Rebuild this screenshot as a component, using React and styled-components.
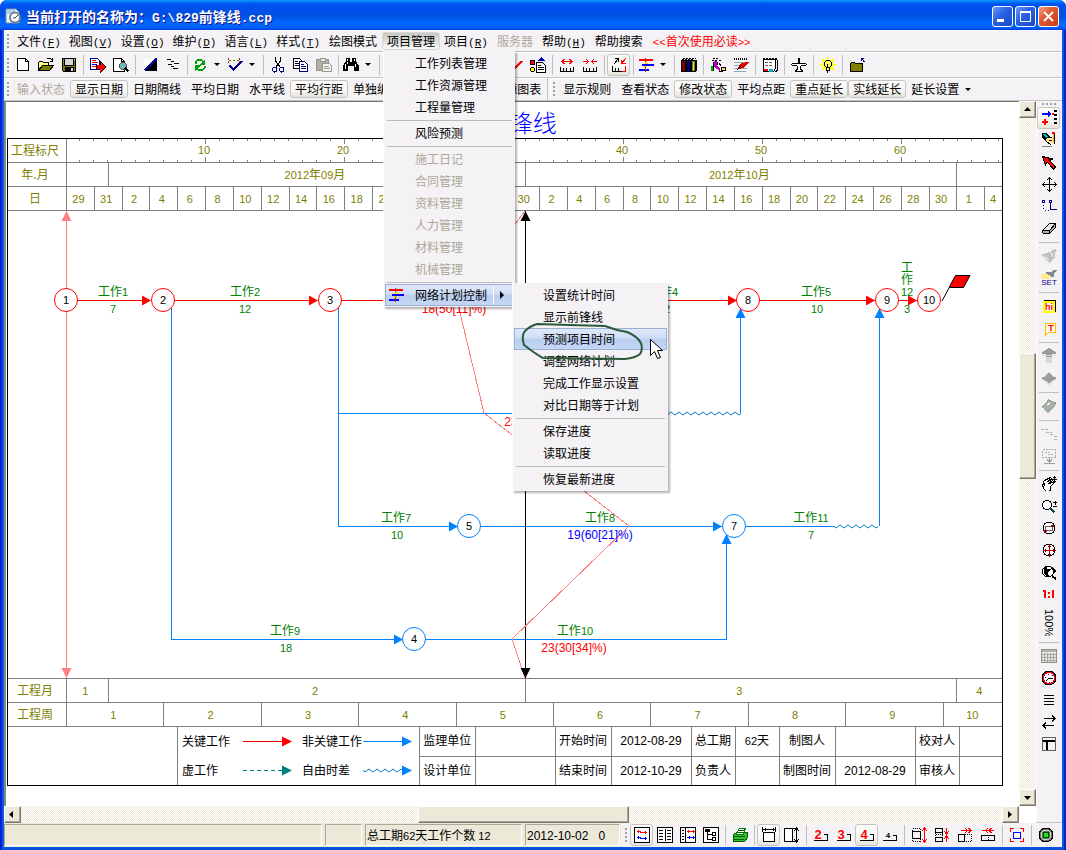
import React from 'react'
import styled, { createGlobalStyle, css } from 'styled-components'

const CJK = "'Noto Sans CJK SC', sans-serif"
const SANS = "'Liberation Sans', Arial, sans-serif"
const MONO = "'Liberation Mono', 'Courier New', monospace"

const GlobalStyle = createGlobalStyle`
    body{
        margin: 0;
        background: #fff;
        font-family: ${CJK};
        font-size: 12px;
        line-height: 16px;
        color: #000;
    }
    *{
        box-sizing: border-box;
    }
    button{
        font: inherit;
        color: inherit;
        cursor: default;
    }
`

/* ---------- text ---------- */

const Latin = styled.span`
    font-family: ${(p) => (p.$mono ? MONO : SANS)};
    font-size: ${(p) => p.$size || 11}px;
    line-height: 1;
    white-space: pre;
`
const runs = (text) => text.match(/[\x20-\x7e]+|[^\x20-\x7e]+/g) || []

const Mixed = ({ text, size, mono }) =>
    runs(text).map((r, i) => (/^[\x20-\x7e]/.test(r) ? <Latin key={i} $size={size} $mono={mono}>{r}</Latin> : r))

const SvgText = ({ x, y, fill, text, size = 11 }) => (
    <text x={x} y={y + 4} fill={fill} textAnchor="middle" fontSize="12" fontFamily={CJK}>
        {runs(text).map((r, i) => (/^[\x20-\x7e]/.test(r)
            ? <tspan key={i} fontSize={size} fontFamily={SANS}>{r}</tspan>
            : <tspan key={i}>{r}</tspan>))}
    </text>
)

/* ---------- window ---------- */

const Window = styled.div`
    display: flex;
    flex-direction: column;
    min-height: 100vh;
    background: linear-gradient(90deg, #0019cf 0, #0831d9 2px, #1666ee 3px, #0855dd 4px, #0855dd calc(100% - 4px), #1666ee calc(100% - 3px), #0831d9 calc(100% - 2px), #0019a0 100%);
    border-radius: 7px 7px 0 0;
`
const TitleBar = styled.header`
    display: flex;
    align-items: center;
    height: 30px;
    padding: 2px 7px 0 5px;
    border-radius: 7px 7px 0 0;
    background: linear-gradient(180deg, #0997ff 0, #0053ee 4px, #0050ee 8px, #0050e0 16px, #0066ff 22px, #0066ff 26px, #005bff 28px, #003dd7 100%);
`
const TitleText = styled.h1`
    flex: 1;
    margin: 0 0 0 5px;
    font-size: 14px;
    font-weight: bold;
    line-height: 20px;
    color: #fff;
    text-shadow: 1px 1px 0 #0f1089;
    white-space: nowrap;
`
const WindowButtons = styled.div`
    display: flex;
    gap: 2px;
`
const WindowButton = styled.button`
    width: 21px;
    height: 21px;
    padding: 0;
    border: 1px solid #fff;
    border-radius: 3px;
    background: ${(p) => p.$close
        ? 'linear-gradient(135deg, #f0a088 0, #e05a34 40%, #c83c14 100%)'
        : 'linear-gradient(135deg, #6c9cf8 0, #2c64e4 40%, #1848c8 100%)'};
    svg{
        display: block;
    }
`
const Frame = styled.div`
    flex: 1;
    display: flex;
    flex-direction: column;
    margin: 0 4px 4px;
    background: #f4f2f5;
`
const Main = styled.main`
    flex: 1;
    display: flex;
`

/* ---------- bars ---------- */

const Bar = styled.div`
    display: flex;
    align-items: center;
    height: ${(p) => p.$height}px;
    padding-left: 3px;
    border-bottom: 1px solid #c4c2c4;
    box-shadow: inset 0 1px 0 #fff;
`
const Grip = styled.span`
    flex: none;
    width: 2px;
    height: 14px;
    margin-right: ${(p) => p.$gap || 3}px;
    background: repeating-linear-gradient(180deg, #a0a0a4 0, #a0a0a4 2px, transparent 2px, transparent 4px);
`
const pressed = css`
    border-color: #c6c4c0;
    background: linear-gradient(180deg, #fcfcfc 0, #f8f7f5 60%, #e6e4da 100%);
`
const MenuItem = styled.div`
    position: relative;
    display: flex;
    align-items: center;
    height: 100%;
`
const MenuButton = styled.button`
    height: 18px;
    padding: 0 ${(p) => (p.$key ? 3 : 4)}px;
    border: 1px solid ${(p) => (p.$open ? '#d8d6d8' : 'transparent')};
    border-radius: 3px;
    background: ${(p) => (p.$open ? 'linear-gradient(180deg, #c8c8c4 0, #dedcda 50%, #fafafa 100%)' : 'none')};
    color: ${(p) => p.$color || '#000'};
    line-height: 16px;
    white-space: nowrap;
`
const TextButton = styled.button`
    display: flex;
    align-items: center;
    height: 18px;
    padding: 0 4px;
    border: 1px solid transparent;
    border-radius: 3px;
    background: none;
    line-height: 16px;
    white-space: nowrap;
    &:disabled{
        color: #aca899;
    }
    ${(p) => p.$on && pressed}
`
const BarEnd = styled.span`
    width: 4px;
    height: 100%;
    margin: 0 2px 0 1px;
    border-left: 1px solid #c4c2c4;
    border-right: 1px solid #fff;
`
const ToolButton = styled.button`
    flex: none;
    display: flex;
    align-items: center;
    justify-content: center;
    width: ${(p) => (p.$drop ? 35 : 23)}px;
    height: 22px;
    padding: 0;
    border: 1px solid transparent;
    border-radius: 3px;
    background: none;
    ${(p) => p.$on && pressed}
`
const DropMark = styled.span`
    flex: none;
    margin: 0 3px 0 6px;
    border: 3px solid transparent;
    border-top-color: #000;
    border-bottom: 0;
`
const Sep = styled.span`
    flex: none;
    width: 1px;
    height: 20px;
    margin: 0 2px 0 3px;
    background: #c0bec0;
`

/* ---------- menus ---------- */

const Popup = styled.div`
    position: absolute;
    z-index: 5;
    top: ${(p) => (p.$sub ? '-1px' : '100%')};
    left: ${(p) => (p.$sub ? 'calc(100% - 2px)' : '1px')};
    width: ${(p) => (p.$sub ? 156 : 132)}px;
    padding: 1px;
    background: #f4f2f5;
    border-left: 1px solid #fff;
    box-shadow: 2px 2px 2px rgba(0, 0, 0, 0.3);
`
const PopupRow = styled.div`
    position: relative;
`
const PopupItem = styled.button`
    display: flex;
    align-items: center;
    width: 100%;
    height: 22px;
    padding: 0 0 0 ${(p) => p.$indent}px;
    border: 1px solid ${(p) => (p.$on ? '#98b0d4' : 'transparent')};
    background: ${(p) => (p.$on ? 'linear-gradient(180deg, #dfe8f8 0, #cfdef6 45%, #b8cef0 50%, #c4d6f4 100%)' : 'none')};
    text-align: left;
    white-space: nowrap;
    &:disabled{
        color: #aca899;
    }
`
const PopupText = styled.span`
    flex: 1;
    margin-left: ${(p) => (p.$icon ? 11 : 0)}px;
`
const SubMark = styled.span`
    width: 20px;
    height: 18px;
    padding: 5px 0 0 6px;
    border-left: 1px solid #fff;
    &::after{
        content: '';
        display: block;
        width: 0;
        border: 4px solid transparent;
        border-left-color: #000;
        border-right: 0;
    }
`
const PopupLine = styled.hr`
    height: 1px;
    margin: 2px 2px 1px;
    border: 0;
    background: #bcbabc;
`
const Marker = styled.svg`
    position: absolute;
    z-index: 6;
    top: 36px;
    left: 7px;
    pointer-events: none;
`

/* ---------- document ---------- */

const Document = styled.section`
    flex: 1;
    min-width: 0;
    display: grid;
    grid-template-columns: minmax(0, 1fr) 17px;
    grid-template-rows: 1fr 17px;
    background: #fff;
`
const Canvas = styled.div`
    padding: 6px 16px 20px 1px;
    border-top: 1px solid #77756c;
    border-left: 2px solid #8a887e;
    background: #fff;
`
const ChartTitle = styled.h2`
    margin: 0 0 2px;
    padding-right: 2px;
    font-size: 24px;
    font-weight: 300;
    line-height: 28px;
    color: #0000ff;
    text-align: center;
`
const Chart = styled.div`
    border: 1px solid #000;
    color: #808000;
`
const ScaleRow = styled.div`
    display: flex;
    height: 24px;
    ${(p) => (p.$bottom ? 'border-top' : 'border-bottom')}: 1px solid #808080;
`
const RowLabel = styled.div`
    flex: none;
    width: 59px;
    border-right: 1px solid #808080;
    line-height: 22px;
    text-align: center;
    padding-right: 4px;
`
const Cells = styled.div`
    flex: 1;
    min-width: 0;
    display: grid;
    grid-template-columns: ${(p) => p.$cols};
`
const Cell = styled.div`
    min-width: 0;
    border-right: 1px solid #808080;
    line-height: 22px;
    text-align: center;
    padding-right: 4px;
    &:last-child{
        border-right: 0;
        padding-right: 1px;
    }
`
const Drawing = styled.svg`
    display: block;
    width: 100%;
    height: auto;
`
const RulerSvg = styled.svg`
    display: block;
    flex: 1;
    min-width: 0;
    height: 23px;
`
const Footer = styled.div`
    display: flex;
    height: 59px;
    border-top: 1px solid #808080;
    color: #000;
`
const FooterBlank = styled.div`
    width: 170px;
    border-right: 1px solid #808080;
`
const Legend = styled.div`
    display: grid;
    grid-template-columns: 61px 59px 61px 60px;
    grid-template-rows: 28px 30px;
    align-items: center;
    width: 242px;
    padding-left: 4px;
    border-right: 1px solid #808080;
    white-space: nowrap;
    svg{
        display: block;
    }
`
const Info = styled.table`
    flex: 1;
    table-layout: fixed;
    border-collapse: collapse;
    td, th{
        height: 29px;
        padding: 0 0 2px;
        border-right: 1px solid #808080;
        font-weight: normal;
        text-align: center;
        white-space: nowrap;
    }
    td:last-child{
        border-right: 0;
    }
    tr + tr > *{
        border-top: 1px solid #808080;
    }
`
const Track = styled.div`
    display: flex;
    flex-direction: ${(p) => (p.$vertical ? 'column' : 'row')};
    background: repeating-conic-gradient(#ece9d8 0 25%, #fff 0 50%) 0 0 / 2px 2px;
`
const ScrollButton = styled.button`
    flex: none;
    display: flex;
    align-items: center;
    justify-content: center;
    width: 17px;
    height: 17px;
    padding: 0;
    border: 1px solid;
    border-color: #fff #77756c #77756c #fff;
    box-shadow: inset -1px -1px 0 #aca899;
    background: #ece9d8;
`
const Gap = styled.span`
    flex: ${(p) => p.$grow} 0 0;
`
const Thumb = styled.div`
    flex: ${(p) => p.$grow} 0 0;
    border: 1px solid;
    border-color: #fff #77756c #77756c #fff;
    box-shadow: inset -1px -1px 0 #aca899;
    background: #ece9d8;
`
const SideBar = styled.aside`
    display: flex;
    flex-direction: column;
    align-items: center;
    width: 26px;
    padding: 2px 2px 0 0;
    border-left: 1px solid #fff;
    border-bottom: 1px solid #c4c2c4;
`
const SideGrip = styled.span`
    width: 14px;
    height: 2px;
    margin-bottom: 2px;
    background: repeating-linear-gradient(90deg, #a0a0a4 0, #a0a0a4 2px, transparent 2px, transparent 4px);
`
const SideButton = styled(ToolButton)`
    width: 23px;
    height: ${(p) => (p.$tall ? 34 : 22)}px;
`
const SideSep = styled.span`
    width: 20px;
    height: 1px;
    margin: 3px 0 2px;
    background: #c0bec0;
`
const StatusBar = styled.footer`
    display: flex;
    height: 24px;
`
const Panels = styled.div`
    flex: 1;
    display: flex;
    gap: 3px;
    padding: 1px 1px 1px 0;
    background: #ece9d8;
`
const Panel = styled.div`
    flex: ${(p) => (p.$width ? `0 0 ${p.$width}px` : '1')};
    padding-left: 1px;
    border: 1px solid;
    border-color: #aca899 #fff #fff #aca899;
    line-height: 20px;
    white-space: pre;
    overflow: hidden;
`
const StatusTools = styled.div`
    display: flex;
    align-items: center;
    padding: 0 5px 0 4px;
`

/* ---------- icons ---------- */

const P = ({ d, c = '#000', f = 'none', w = 1 }) => <path d={d} stroke={c} fill={f} strokeWidth={w} />
const F = ({ d, c = '#000' }) => <path d={d} fill={c} />

const Glyph = ({ x, y, size, fill = '#f00', children }) => (
    <text x={x} y={y} fontSize={size} fill={fill} fontWeight="bold" textAnchor="middle" fontFamily={SANS}>{children}</text>
)

const icons = {
    blank: null,
    fresh: <P d="M2.5 1.5h8l3 3v9h-11zM10.5 1.5v3h3" f="#fff" />,
    open: <>
        <P d="M.5 13.5v-8l1-1h3l1 1h5v3" f="#ffff80" />
        <P d="M.5 13.5l4-5h11l-4 5z" f="#808000" />
        <P d="M8.5 2.5l1-1h3l2 2M14.500 1v3H12" />
    </>,
    save: <>
        <P d="M1.5 1.5h13v13h-12l-1-1z" f="#808000" />
        <F d="M4 2h8v6H4z" c="#d8d8d8" /><F d="M13 2h1v1h-1z" c="#fff" />
        <F d="M4 10h9v5H4z" /><F d="M10 11h2v3h-2z" c="#e0e0e0" /><P d="M3.5 2v6.5h9V2" />
    </>,
    exportTo: <>
        <P d="M.5 1.5h7l2 2v9h-9z" c="#000080" f="#fff" />
        <P d="M2 3.5h4M2 5.5h6M2 9.5h4" c="#f00" /><P d="M2 7.5h5" c="#00f" />
        <F d="M6 8h4V4l6 6-6 6v-4H6z" /><F d="M7 8h4V5l4 5-5 5v-3H7z" c="#f00" />
    </>,
    preview: <>
        <P d="M.5 1.5h8l3 3v10H.5zM8.5 1.5v3h3" f="#fff" />
        <circle cx="10" cy="9" r="3.5" fill="#70b8c0" stroke="#505050" />
        <P d="M12 11l3.5 3.5" w="2" />
    </>,
    slope: <><F d="M2 2h12L2 14z" c="#fff" /><F d="M15 2v12H3z" /><P d="M2.5 13.5l12-12" c="#0000a0" w="2" /></>,
    steps: <P d="M2 2.500h4M6 4.500h3M9 6.500h5M3 7.500h4M6 9.500h3M8 11.500h5" />,
    refresh: <>
        <path d="M3.5 7V5l2-2h4l2 2" stroke="#00a000" strokeWidth="2" fill="none" />
        <path d="M12.5 9v2l-2 2h-4l-2-2" stroke="#00a000" strokeWidth="2" fill="none" />
        <F d="M13 2v6H7zM3 14V8h6z" c="#00a000" />
    </>,
    check: <>
        <path d="M2 3.5h11" stroke="#00a000" strokeDasharray="2 2" /><path d="M1.5 1v5M12.5 1v5" stroke="#c03000" strokeDasharray="2 1" />
        <P d="M2.5 8l4 5L15 4" c="#000080" w="2" />
    </>,
    cut: <>
        <P d="M5.5 0v4l4.500 6M10.500 0v4L6 10" />
        <ellipse cx="4.500" cy="12.500" rx="2" ry="2.500" stroke="#000080" fill="none" /><ellipse cx="11.500" cy="12.500" rx="2" ry="2.500" stroke="#000080" fill="none" />
    </>,
    copy: <>
        <P d="M.5 1.500h6l3 3v7h-9z" f="#fff" /><P d="M2 4.500h3M2 6.500h5M2 8.500h4" />
        <P d="M6.500 4.500h5l3 3v7h-8z" c="#000080" f="#fff" /><P d="M8 7.500h3M8 9.500h5M8 11.500h5" c="#000080" />
    </>,
    paste: <>
        <P d="M.5 2.500h12v11H.5z" c="#989890" f="#b0b0a8" /><P d="M4.500 1.500h5v3h-5z" c="#989890" f="#e4e4dc" />
        <P d="M6.500 6.500h7l2 2v6h-9z" c="#989890" f="#f4f4ee" /><P d="M8 9.500h5M8 11.500h6" c="#989890" />
    </>,
    find: <>
        <F d="M3 1h4v4h2V1h4v3l3 5v5h-5V9H5v5H0V9l3-5z" />
        <P d="M4.500 2v2M11.500 2v2M2.500 7v5M4.500 5v2M12.500 7v3" c="#fff" />
    </>,
    redCheck: <P d="M2.500 9l4 4L15 4" c="#f00" w="2" />,
    shapes: <>
        <P d="M.5 3.500h4v4h-4z" f="#f00" /><circle cx="2.500" cy="12.500" r="2" fill="#ff0" stroke="#000" /><F d="M8 4l3.500-4L15 4z" c="#0000c0" />
        <P d="M6.500 5.500h6l3 3v7h-9z" f="#fff" /><P d="M8 8.500h3M8 10.500h6M8 12.500h6" />
    </>,
    widen: <><P d="M1.500 10v4.500h13V10M4.500 11v3M7.500 11v3M11.500 11v3" /><P d="M3 4.500h10M5.500 2l-2.500 2.500L5.500 7M10.500 2l2.500 2.500L10.500 7" c="#f00" /></>,
    narrow: <><P d="M1.500 10v4.500h13V10M4.500 11v3M7.500 11v3M11.500 11v3" /><P d="M1 4.500h5M4 2l2.500 2.500L4 7M15 4.500h-5M12 2L9.500 4.500 12 7" c="#f00" /></>,
    adjust: <>
        <P d="M1.500 9v5.500h9M4.500 11v3M7.500 11v3M3 7l4-5M4 1.500h3.500V5" /><P d="M10.500 14.500h4V9M10.500 6.500l4-5M10.500 3v3.500h4" c="#f00" />
    </>,
    progress: <>
        <F d="M7 4h2l1 3-2 4H6l1-4z" c="#ffd000" /><P d="M1 2.500h14" c="#f00" w="2" /><P d="M4 7.500h12M1 12.500h10" c="#00f" w="2" />
        <P d="M7.500 1v4M7.500 10v5" c="#c03000" />
    </>,
    books: <>
        <P d="M.5 3.500h4v11h-4z" f="#800000" /><P d="M5.500 3.500h4v11h-4z" f="#000080" /><P d="M10.500 3.500h4v11h-4z" f="#808000" />
        <path d="M2 1.500h13M1 2.500h12" stroke="#000" strokeDasharray="2 1" /><P d="M15.500 3v11" /><P d="M12.500 5v8" c="#e0e080" />
    </>,
    people: <>
        <path d="M3 1.500h6M2 3.500h5M9 3.500h2" stroke="#000" strokeDasharray="2 1" /><F d="M4 4h3v5l3 3v2L4 10z" c="#c000c0" /><F d="M1 9h2v5H1z" c="#00a000" />
        <P d="M3.500 5v9M9 6l2 3M7.500 5v3" /><circle cx="13.500" cy="12" r="2" fill="#ffe040" stroke="#000" /><P d="M9 14.500h4" />
    </>,
    note: <>
        <F d="M1 2h12v13H1z" c="#f4f8f8" /><path d="M1 1.500h14" stroke="#000" strokeWidth="2" strokeDasharray="1 1" />
        <P d="M1 5.500h13M1 8.500h10M1 11.500h13M1 14.500h12" c="#90a8a8" /><F d="M5 11l3-5 8-1-4 5-5 2z" c="#e00000" /><P d="M4 13l5-5" />
    </>,
    notepad: <>
        <P d="M1.500 2.500h12v9l-2 3h-10z" f="#fff" /><path d="M1 1.500h14" stroke="#000" strokeWidth="2" strokeDasharray="2 1" />
        <P d="M3 5.500h3M7 5.500h3M3 8.500h3M7 8.500h3" c="#606060" /><P d="M15.500 3v10l-2 2" w="1" /><F d="M2 12h4v2H2z" c="#f00" /><F d="M7 12h4v3H7z" c="#00b0c0" />
    </>,
    plane: <P d="M7.500 1.500h1v5h6l1 1-1 1h-4l-1 1v3l2 1v1h-7v-1l2-1v-3l-1-1h-4l-1-1 1-1h6z" f="#fff" />,
    bulb: <>
        <F d="M7 0h2v2H7zM0 7h2v2H0zM14 7h2v2h-2zM2 2h2v2H2zM12 2h2v2h-2zM3 3h10v9H3zM2 11h2v2H2zM12 11h2v2h-2z" c="#ff0" />
        <circle cx="8" cy="7" r="3.500" fill="#ffff60" stroke="#000" /><P d="M6.500 10.500h3v3h-3zM7.500 14v2M7.500 7v3" />
    </>,
    folder: <><P d="M1.500 14.500v-8l1-1h3l1 1h7v8z" f="#808000" /><P d="M15.500 5l-3-3.500M12 3.500v-2h3" c="#000080" /></>,

    addWork: <>
        <P d="M1 4h8" c="#00f" w="2" /><F d="M7 1l4 3-4 3z" c="#00f" /><F d="M11 3h2v2h-2z" c="#f00" /><F d="M3 9h2v2h2v2H5v2H3v-2H1v-2h2z" c="#f00" />
        <path d="M14.500 0v15" stroke="#000" strokeWidth="3" strokeDasharray="2 2" />
    </>,
    pen: <>
        <F d="M1 1h5l2 3 3 2v6H7L1 5z" /><F d="M2 2h3l2 3-2 1z" c="#00c0c0" /><F d="M6 6l5-1 2 3-3 5-5-4z" c="#ffe8a0" />
        <P d="M6 6l5-1M10 13l-5-4M8 8l3 1" /><P d="M12.500 1v10" c="#ffb000" w="2" /><F d="M11 0h3v2h-3z" c="#f00" /><P d="M1 14.500h10" c="#808080" /><P d="M14 2l-.5 10" />
    </>,
    pointer: <P d="M1.500 2.500l10 2.500-3 1 6 7-2 2-6.500-7-1.500 3z" f="#f00" />,
    move: <P d="M8.500 1v15M1 8.500h15M6 4l2.500-2.500L11 4M6 13l2.500 2.500L11 13M4 6L1.500 8.500 4 11M13 6l2.500 2.500L13 11" />,
    link: <>
        <path d="M2.500 4v8h7" stroke="#000080" fill="none" strokeDasharray="1 2" /><P d="M1.500 2.500h2v2h-2zM8.500 2.500h2v2h-2zM9.500 5v6.500H16" c="#000080" />
    </>,
    eraser: <><P d="M1.500 10.500l7-7h6l-6 7z" f="#e8e8e8" /><P d="M1.500 10.500h7v3h-6l-1-1zM8.500 13.500l6-6v-4l-6 7z" f="#a8b0a8" /></>,
    brush: <><F d="M0 7l5-2 4-1 5-3 2 1-2 3v4l-6 6-5-5z" c="#c0c4c0" /><P d="M9 4l4 5M3 8l5 4" c="#f0f0f0" /></>,
    brushSet: <>
        <F d="M2 4l4-2h4l4-3 2 1-3 4v3H3z" c="#808890" /><F d="M0 5l4-2 6 3-1 3H1z" c="#ffe890" />
        <text x="8" y="15" fontSize="8" textAnchor="middle" fill="#000080" fontFamily={SANS}>SET</text>
    </>,
    hi: <><P d="M3.500 2.500h11v11h-11z" f="#fff" /><P d="M3 3v11h10V4H3" c="#ff0" w="2" /><Glyph x="8" y="12" size="9">hi</Glyph></>,
    tip: <><P d="M4.500 3.500h10v9h-7l-3 3z" c="#ffc000" f="#fff8e8" w="1" /><Glyph x="10" y="11" size="9">T</Glyph></>,
    up: <><F d="M8 0l7 4v2h-4v3H5V6H1V4z" c="#9a9a9a" /><F d="M5 9h6v6H5zM2 7h12v1H2z" c="#d8d8d4" /></>,
    down: <><F d="M8 1l7 8-7 6-7-6z" c="#dcdcd8" /><F d="M8 2l3 4 5 2-8 5-8-5 5-2z" c="#9c9c9c" /></>,
    book: <><P d="M1.500 9l6-7 7 3-7 8z" c="#90a090" f="#a8b4a8" /><P d="M1.500 9l6 5 7-8M3 11l4 4 7-7" c="#a8b4a8" /><P d="M6 7l3-2" c="#fff" /></>,
    cascade: <path d="M0 3.500h8M5 6.500h6M9 8.500h4M13 10.500h3M13 13.500h3" stroke="#a8b4a8" strokeDasharray="3 1" />,
    dropRow: <>
        <path d="M1.500 1.500h13v8h-13zM4 4.500h5M7 6.500h5" stroke="#a8b4a8" fill="none" strokeDasharray="2 1" /><P d="M8.500 9v5M6 11.500l2.500 2.500 2.500-2.500M3 15.500h11" c="#98a498" />
    </>,
    hand: <>
        <P d="M5.500 15.500l-3-3-1-4 1-1 1 2-1-4 1-1 6-3 1 1-4 3 5-2v1l-4 3 5-1v1l-3 3v3l-1 2" f="#fff" /><P d="M13.500 0v7M10 3.500h6M12 1.500h3M12 5.500h3" />
    </>,
    zoom: <><circle cx="6" cy="7" r="4.500" stroke="#000" fill="#fff" /><P d="M9.500 10.500l4 4" c="#004040" w="2" /><P d="M12 4.500h4M14 2.500v4M12 8.500h4" /></>,
    fitBox: <><circle cx="8" cy="8" r="6" stroke="#000" fill="#fff" /><P d="M4.500 6.500h7v4h-7z" c="#606060" /><F d="M10 5h3v2h-3zM3 10h3v2H3z" c="#a00000" /></>,
    target: <><circle cx="8" cy="8" r="6" stroke="#000" fill="#fff" /><P d="M8.500 2v13M2 8.500h13" c="#c00000" /><P d="M7 4.500h3M7 12.500h3M4.500 7v3M12.500 7v3" c="#600" /></>,
    zoomBack: <><circle cx="7" cy="7.500" r="5.500" stroke="#000" fill="#fff" /><F d="M3 8V4l3-2v3h4L7 8v3l3 2H6L4 11z" /><P d="M11 4l3 3-2 2M11 12l4 3" w="2" /></>,
    oneToOne: <F d="M3 4h2v8H3zM2 4h3v2H2zM11 4h2v8h-2zM7 6h2v2H7zM7 10h2v2H7z" c="#f00" />,
    calendar: <>
        <P d="M.5 1.500h15v13H.5z" c="#909088" f="#e8e8e0" /><F d="M1 2h14v2H1z" c="#a8b8a8" />
        <P d="M1 6.500h14M1 9.500h14M1 12.500h14M3.500 5v9M6.500 5v9M9.500 5v9M12.500 5v9" c="#a8a8a0" />
    </>,
    clock: <><circle cx="8" cy="8" r="7" stroke="#000" fill="#f00" /><circle cx="8" cy="8" r="5" fill="#fff" /><P d="M8 8.500h4M8 8.500l-3 2" /><F d="M7 4h1v1H7zM4 7h1v1H4zM8 12h1v1H8zM11 5h1v1h-1z" c="#00f" /></>,
    lines: <P d="M3 3.500h10M3 6.500h10M3 9.500h10M3 12.500h10" />,
    swap: <P d="M3 4.500h11M11 1.500l3 3-3 3M13 11.500H2M5 8.500l-3 3 3 3" />,
    layout: <><P d="M1.500 1.500h13v13h-13z" c="#606060" /><P d="M2 5h12M6 5v9" w="2" /></>,

    viewNet: <><P d="M.5 .5h15v15H.5z" f="#fff" /><P d="M3 4.500h3l1 1h6M4 3v3M11 4v3" c="#f00" /><P d="M3 10.500h3l1 1h6M4 9v3M11 10v3" c="#00f" /></>,
    viewBars: <><P d="M.5 .5h15v15H.5z" f="#fff" /><P d="M8.500 2v12M2 3.500h4M2 6.500h4M2 9.500h4M2 12.500h4M10 3.500h4M10 6.500h4M10 9.500h4M10 12.500h4" /></>,
    viewMix: <><P d="M.5 .5h15v15H.5zM5.500 1v14M2 3.500h2M2 6.500h2M2 9.500h2M2 12.500h2" f="#fff" /><P d="M7 4.500h8M8.500 3v3M13.500 3v3" c="#f00" /><P d="M7 10.500h8M9.500 9v3M13.500 9v3" c="#00f" /></>,
    viewTree: <><P d="M.5 .5h15v15H.5z" f="#fff" /><P d="M3 3.500h4M4.500 4v8h5M5 7.500h4" /><P d="M9.500 5.500h3v3h-3zM9.500 10.500h3v3h-3zM2.500 2.500h4v2h-4z" /></>,
    print: <>
        <P d="M1.500 7.500l3-2h11v5l-3 4h-11z" c="#006000" f="#30c030" /><P d="M4.500 7l3-6h6l-2 6z" c="#008000" f="#fff" /><P d="M1 9.500h12M2 12.500h10M7 3.500h5M6 5.500h5" c="#006000" />
    </>,
    boxWide: <><P d="M2.500 5.500h11v9h-11z" f="#fff" /><P d="M1 2.500h14M4 1v3M12 1v3M1.500 0v5M14.500 0v5" /></>,
    boxTall: <><P d="M.5 1.500h8v13h-8z" f="#fff" /><P d="M12.500 1v14M10 4l2.500-3L15 4M10 12l2.500 3 2.500-3M9 1.500h2M9 14.500h2" /></>,
    two: <><Glyph x="5" y="12" size="13">2</Glyph><P d="M1 13.500h13v-6h-3" /></>,
    three: <><Glyph x="5" y="12" size="13">3</Glyph><P d="M1 13.500h13v-6h-3" /></>,
    four: <><Glyph x="5" y="12" size="13">4</Glyph><P d="M1 13.500h13v-6h-3" /></>,
    fourSmall: <><Glyph x="6" y="11" size="8" fill="#000">4</Glyph><P d="M1 13.500h13v-5h-3" /></>,
    growV: <><path d="M1.500 1.500h8v3h-8zM1.500 11.500h8v3h-8z" stroke="#000" fill="none" strokeDasharray="1 1" /><P d="M1.500 4.500h8v7h-8z" /><P d="M13.500 1v14M11 4l2.500-3L16 4M11 12l2.500 3 2.500-3" c="#f00" /></>,
    shrinkV: <><path d="M1.500 5.500v5M8.500 5.500v5M2 7.500h7" stroke="#000" strokeDasharray="1 1" /><P d="M1.500 1.500h7v4h-7zM1.500 10.500h7v4h-7z" /><P d="M12.500 1v5M10 4l2.500 3L15 4M12.500 15v-5M10 12l2.500-3 2.500 3" c="#f00" /></>,
    growH: <><path d="M8 7.500h6.500v7H8" stroke="#000" fill="none" strokeDasharray="1 1" /><P d="M1.500 7.500h6v7h-6z" /><P d="M4 3.500h10M8 1l2.500 2.500L8 6M11.500 1L14 3.500 11.500 6" c="#f00" /></>,
    shrinkH: <><path d="M8.500 8v6" stroke="#000" strokeDasharray="1 1" /><P d="M1.500 8.500h13v5h-13z" /><P d="M2 3.500h12M8 1L5.500 3.500 8 6M11.500 1L9 3.500 11.500 6" c="#f00" /></>,
    fit: <><P d="M1.500 5V1.500H5M11 1.500h3.500V5M14.500 11v3.500H11M5 14.500H1.500V11" c="#f00" /><P d="M4.500 5h7v6h-7z" c="#00f" /></>,
    ball: <><circle cx="8" cy="8" r="7" fill="#707070" stroke="#000" /><circle cx="8" cy="8" r="5" fill="#484" stroke="#ccc" /><circle cx="8" cy="8" r="3" fill="#20e020" stroke="#040" /></>,
}

const Icon = ({ name }) => (
    <svg width="16" height="16" viewBox="0 0 16 16" fill="none" shapeRendering="crispEdges" aria-hidden="true">{icons[name]}</svg>
)

const Tools = ({ list, Button = ToolButton, Line = Sep }) =>
    list.map((t, i) => {
        if (t === '|') return <Line key={i} />
        const on = t.endsWith('!')
        const drop = t.endsWith('+')
        const name = t.replace(/[!+]/, '')
        return (
            <Button key={i} type="button" aria-label={name} $on={on} $drop={drop}>
                <Icon name={name} />
                {drop && <DropMark />}
            </Button>
        )
    })

/* ---------- data ---------- */

const menus = [
    ['文件', 'F'], ['视图', 'V'], ['设置', 'O'], ['维护', 'D'], ['语言', 'L'], ['样式', 'T'], ['绘图模式'], ['项目管理'],
    ['项目', 'R'], ['服务器', '', '#aca899'], ['帮助', 'H'], ['帮助搜索'], ['<<首次使用必读>>', '', '#ff0000'],
]
const projectMenu = ['工作列表管理', '工作资源管理', '工程量管理', '-', '风险预测', '-',
    '*施工日记', '*合同管理', '*资料管理', '*人力管理', '*材料管理', '*机械管理', '-']
const controlMenu = ['设置统计时间', '显示前锋线', '预测项目时间', '调整网络计划', '完成工作显示设置', '对比日期等于计划', '-',
    '保存进度', '读取进度', '-', '恢复最新进度']

const toolbar = ['fresh', 'open', 'save', '|', 'exportTo', 'preview', '|', 'slope', 'steps', '|', 'refresh+', 'check+', '|',
    'cut', 'copy', 'paste', '|', 'find+', '|', 'blank', 'blank', 'blank', 'blank', 'blank', '|', 'redCheck', 'shapes', '|',
    'widen', 'narrow', '|', 'adjust!', '|', 'progress+', '|', 'books', '|', 'people', 'note', '|', 'notepad', '|', 'plane', '|', 'bulb', '|', 'folder']
const sideTop = ['addWork!', 'pen', 'pointer', 'move', 'link', 'eraser', '|', 'brush', 'brushSet', '|', 'hi', 'tip', '|', 'up', 'down', '|',
    'book', '|', 'cascade', 'dropRow', '|', 'hand', 'zoom', 'fitBox', 'target', 'zoomBack', 'oneToOne']
const sideBottom = ['|', 'calendar', 'clock', 'lines', 'swap', 'layout']
const statusTools = ['viewNet!', 'viewBars', 'viewMix', 'viewTree', '|', 'print', '|', 'boxWide!', 'boxTall', '|',
    'two', 'three', 'four!', 'fourSmall', '|', 'growV', 'shrinkV', 'growH', 'shrinkH', '|', 'fit', '|', 'ball']

const leftOptions = ['*输入状态', '!显示日期', '日期隔线', '平均日期', '水平线', '!平均行距', '单独编辑', '自动调整行距', '资源图表']
const rightOptions = ['显示规则', '查看状态', '!修改状态', '平均点距', '!重点延长', '!实线延长']

const days = ['29', '31',
    ...Array.from({ length: 15 }, (_, i) => `${i * 2 + 2}`),
    ...Array.from({ length: 15 }, (_, i) => `${i * 2 + 2}`), '1', '4']

const RED = '#ff0000'
const BLUE = '#0080ff'
const GREEN = '#008000'
const PINK = '#ff8080'
const DAY = 13.925

const nodes = [
    ['1', 66, 300, RED], ['2', 163, 300, RED], ['3', 330, 300, RED], ['8', 748, 300, RED], ['9', 887, 300, RED], ['10', 929, 300, RED],
    ['5', 469, 526, BLUE], ['7', 734, 526, BLUE], ['4', 414, 639, BLUE],
]
const labels = [
    ['工作1', 113, 292], ['7', 113, 309], ['工作2', 245, 292], ['12', 245, 309], ['18(50[11]%)', 454, 309, RED],
    ['工作4', 663, 292], ['12', 664, 309], ['工作5', 816, 292], ['10', 817, 309], ['工', 907, 268], ['作', 907, 280], ['12', 907, 292], ['3', 907, 309],
    ['工作7', 396, 518], ['10', 397, 535], ['工作8', 600, 518], ['19(60[21]%)', 600, 535, '#0000ff'], ['工作11', 811, 518], ['7', 811, 535],
    ['工作9', 285, 631], ['18', 286, 648], ['工作10', 575, 631], ['23(30[34]%)', 574, 648, RED], ['23(30[37]%)', 537, 422, RED],
]

/* ---------- drawings ---------- */

const wave = (x1, x2, y) => {
    let d = `M${x1} ${y}`
    let k = 1
    for (let x = x1; x + 4 <= x2; x += 4) {
        d += `q2 ${k * 3} 4 0`
        k = -k
    }
    return d
}
const right = (x, y) => `M${x} ${y + 0.5}l-9 -5v10z`
const up = (x, y) => `M${x + 0.5} ${y}l-5 10h10z`
const down = (x, y) => `M${x + 0.5} ${y}l-5 -10h10z`

const Network = () => (
    <Drawing viewBox="8 211 994 467" role="img" aria-label="829前锋线">
        <g fill="none" shapeRendering="crispEdges">
            <path d="M66.500 211V678" stroke={PINK} />
            <path d="M78 300.500H150M174 300.500H317M341 300.500H737M760 300.500H875M899 300.500H917" stroke={RED} />
            <path d="M171.500 300V639.500H403M338.500 300V526.500H457M338.500 413.500H665M740.500 413V310M481 526.500H722M746 526.500H834M879.500 526V310M426 639.500H726.500V538" stroke={BLUE} />
            <path d="M525.500 211V678" stroke="#000" />
            <path d="M525 211L457 300L484 413L629 526L512 639L525 678" stroke={PINK} />
        </g>
        <path d={wave(665, 741, 413.5) + wave(834, 880, 526.5)} stroke="#0080c0" fill="none" />
        <path d={up(66, 211) + down(66, 678)} fill={PINK} />
        <path d={up(525, 211) + down(525, 678)} fill="#000" />
        <path d={right(151, 300) + right(318, 300) + right(737, 300) + right(875, 300) + right(917, 300)} fill={RED} />
        <path d={right(458, 526) + right(722, 526) + right(403, 639) + up(740, 308) + up(879, 308) + up(726, 534)} fill={BLUE} />
        <path d="M942 301L949 288" stroke="#000" />
        <path d="M955.500 275.500H970L963.500 287.500H949z" fill={RED} stroke="#000" />
        {nodes.map(([n, x, y, c]) => (
            <g key={n}>
                <circle cx={x} cy={y} r="11.500" fill="#fff" stroke={c} />
                <SvgText x={x} y={y} text={n} fill="#000" />
            </g>
        ))}
        {labels.map(([t, x, y, c], i) => (
            <SvgText key={i} x={x} y={y} text={t} fill={c || GREEN} size={t.includes('%') ? 12 : 11} />
        ))}
    </Drawing>
)

const Ruler = () => (
    <RulerSvg viewBox="67 139 935 23" preserveAspectRatio="xMinYMin meet">
        {Array.from({ length: 67 }, (_, i) => {
            const n = i + 1
            const x = Math.floor(66 + n * DAY) + 0.5
            const len = n % 10 ? 2 : 5
            return <path key={n} d={`M${x} 139v${len}M${x} 162v-${len}`} stroke="#808080" shapeRendering="crispEdges" />
        })}
        {[10, 20, 30, 40, 50, 60].map((n) => <SvgText key={n} x={Math.floor(65 + n * DAY)} y={150} text={`${n}`} fill="#808000" />)}
    </RulerSvg>
)

const LegendArrow = ({ color, dash, wavy }) => (
    <svg width="50" height="12" viewBox="0 0 50 12" fill="none">
        {wavy ? <path d={wave(0, 42, 6.5)} stroke="#0080c0" /> : <path d="M0 6.500H42" stroke={color} strokeDasharray={dash} shapeRendering="crispEdges" />}
        <path d="M49 6.500l-10 -5v10z" fill={color} />
    </svg>
)

const arrows = { up: 'M1 5h7L4.500 1z', down: 'M1 2h7L4.500 6z', left: 'M5 0v7L1 3.500z', right: 'M2 0v7l4-3.500z' }
const Arrow = ({ to }) => <svg width="9" height="7" viewBox="0 0 9 7"><path d={arrows[to]} /></svg>

/* ---------- parts ---------- */

const Items = ({ list, indent, active }) => list.map((t, i) => {
    if (t === '-') return <PopupLine key={i} />
    return (
        <PopupItem key={i} type="button" $indent={indent} $on={t === active} disabled={t[0] === '*'}>
            {t.replace('*', '')}
        </PopupItem>
    )
})

const ProjectMenu = () => (
    <Popup>
        <Items list={projectMenu} indent={29} />
        <PopupRow>
            <PopupItem type="button" $on $indent={2}>
                <Icon name="progress" />
                <PopupText $icon>网络计划控制</PopupText>
                <SubMark />
            </PopupItem>
            <Popup $sub>
                <Items list={controlMenu} indent={28} active="预测项目时间" />
                <Marker width="150" height="46" viewBox="520 319 150 46" fill="none">
                    <path d="M537 324L570 325L605 326L617 330L627 332Q637 336 641 343Q643 350 640 354Q635 358 625 359L543 358Q537 355 524 345Q521 335 525 331Q530 326 537 324z" stroke="#2a5a3a" strokeWidth="2" />
                    <path d="M650.500 339.500v16l4-4 3 7 3-1-3-7h5z" fill="#fff" stroke="#000" />
                </Marker>
            </Popup>
        </PopupRow>
    </Popup>
)

const Option = ({ text }) => (
    <TextButton type="button" $on={text[0] === '!'} disabled={text[0] === '*'}>{text.replace(/[!*]/, '')}</TextButton>
)

const InfoTable = () => (
    <Info>
        <colgroup>
            {[55, 80, 56, 80, 44, 44, 56, 80, 44].map((w, i) => <col key={i} width={w} />)}
            <col />
        </colgroup>
        <tbody>
            <tr>
                <th>监理单位</th><td /><th>开始时间</th><td><Mixed text="2012-08-29" size={12} /></td><th>总工期</th>
                <td><Mixed text="62天" /></td><th>制图人</th><td /><th>校对人</th><td />
            </tr>
            <tr>
                <th>设计单位</th><td /><th>结束时间</th><td><Mixed text="2012-10-29" size={12} /></td><th>负责人</th>
                <td /><th>制图时间</th><td><Mixed text="2012-08-29" size={12} /></td><th>审核人</th><td />
            </tr>
        </tbody>
    </Info>
)

const MONTHS = '30fr 300fr 310fr 32fr'

const App = () => {
    return (
        <>
        <GlobalStyle />
        <Window>
            <TitleBar>
                <svg width="16" height="16" viewBox="0 0 16 16">
                    <path d="M1 1h10l3 3v11H1z" fill="#e8f4f8" stroke="#6890a8" />
                    <path d="M2 2h8v4H2z" fill="#a8d0e0" />
                    <circle cx="10" cy="9.500" r="5" fill="#fff" stroke="#708090" strokeWidth="2" />
                    <path d="M10 10l3-3M10 10H8" stroke="#204060" />
                </svg>
                <TitleText><Mixed text="当前打开的名称为：G:\829前锋线.ccp" size={13} mono /></TitleText>
                <WindowButtons>
                    <WindowButton type="button" aria-label="最小化"><svg width="19" height="19"><path d="M4 12h7v3H4z" fill="#fff" /></svg></WindowButton>
                    <WindowButton type="button" aria-label="最大化"><svg width="19" height="19"><path d="M4.500 5v9.500h10V5M4 5.500h11" stroke="#fff" strokeWidth="1" fill="none" /><path d="M4 4h11v2H4z" fill="#fff" /></svg></WindowButton>
                    <WindowButton type="button" aria-label="关闭" $close><svg width="19" height="19"><path d="M5 5l9 9M14 5l-9 9" stroke="#fff" strokeWidth="2" /></svg></WindowButton>
                </WindowButtons>
            </TitleBar>
            <Frame>
                <Bar as="nav" $height={22}>
                    <Grip $gap={4} />
                    {menus.map(([name, key, color]) => (
                        <MenuItem key={name}>
                            <MenuButton type="button" $key={key} $color={color} $open={name === '项目管理'} disabled={name === '服务器'}>
                                <Mixed text={name} />
                                {key && <Latin $mono>(<u>{key}</u>)</Latin>}
                            </MenuButton>
                            {name === '项目管理' && <ProjectMenu />}
                        </MenuItem>
                    ))}
                </Bar>
                <Bar $height={26}>
                    <Grip $gap={2} />
                    <Tools list={toolbar} />
                </Bar>
                <Bar $height={23}>
                    <Grip />
                    {leftOptions.map((t) => <Option key={t} text={t} />)}
                    <BarEnd />
                    <Grip />
                    {rightOptions.map((t) => <Option key={t} text={t} />)}
                    <TextButton type="button">延长设置<DropMark /></TextButton>
                </Bar>
                <Main>
                    <Document>
                        <Canvas>
                            <ChartTitle><Mixed text="829前锋线" size={20} /></ChartTitle>
                            <Chart>
                                <ScaleRow><RowLabel>工程标尺</RowLabel><Ruler /></ScaleRow>
                                <ScaleRow>
                                    <RowLabel>年.月</RowLabel>
                                    <Cells $cols={MONTHS}>
                                        <Cell /><Cell><Mixed text="2012年09月" /></Cell><Cell><Mixed text="2012年10月" /></Cell><Cell />
                                    </Cells>
                                </ScaleRow>
                                <ScaleRow>
                                    <RowLabel>日</RowLabel>
                                    <Cells $cols="repeat(33, 20fr) 12fr">
                                        {days.map((d, i) => <Cell key={i}><Mixed text={d} /></Cell>)}
                                    </Cells>
                                </ScaleRow>
                                <Network />
                                <ScaleRow $bottom>
                                    <RowLabel>工程月</RowLabel>
                                    <Cells $cols={MONTHS}>
                                        {['1', '2', '3', '4'].map((n) => <Cell key={n}><Mixed text={n} /></Cell>)}
                                    </Cells>
                                </ScaleRow>
                                <ScaleRow $bottom>
                                    <RowLabel>工程周</RowLabel>
                                    <Cells $cols="repeat(9, 70fr) 42fr">
                                        {Array.from({ length: 10 }, (_, i) => <Cell key={i}><Mixed text={`${i + 1}`} /></Cell>)}
                                    </Cells>
                                </ScaleRow>
                                <Footer>
                                    <FooterBlank />
                                    <Legend>
                                        <span>关键工作</span><LegendArrow color={RED} />
                                        <span>非关键工作</span><LegendArrow color={BLUE} />
                                        <span>虚工作</span><LegendArrow color="#008080" dash="4 3" />
                                        <span>自由时差</span><LegendArrow color={BLUE} wavy />
                                    </Legend>
                                    <InfoTable />
                                </Footer>
                            </Chart>
                        </Canvas>
                        <Track $vertical>
                            <ScrollButton type="button" aria-label="向上"><Arrow to="up" /></ScrollButton>
                            <Gap $grow={236} /><Thumb $grow={125} /><Gap $grow={311} />
                            <ScrollButton type="button" aria-label="向下"><Arrow to="down" /></ScrollButton>
                        </Track>
                        <Track>
                            <ScrollButton type="button" aria-label="向左"><Arrow to="left" /></ScrollButton>
                            <Gap $grow={398} /><Thumb $grow={209} /><Gap $grow={374} />
                            <ScrollButton type="button" aria-label="向右"><Arrow to="right" /></ScrollButton>
                        </Track>
                    </Document>
                    <SideBar>
                        <SideGrip />
                        <Tools list={sideTop} Button={SideButton} Line={SideSep} />
                        <SideButton type="button" $tall aria-label="100%">
                            <svg width="14" height="28" viewBox="0 0 14 28"><text transform="translate(3 1) rotate(90)" fontSize="11" fontFamily={SANS}>100%</text></svg>
                        </SideButton>
                        <Tools list={sideBottom} Button={SideButton} Line={SideSep} />
                    </SideBar>
                </Main>
                <StatusBar>
                    <Panels>
                        <Panel />
                        <Panel $width={37} />
                        <Panel $width={157}><Mixed text="总工期62天工作个数 12" /></Panel>
                        <Panel $width={95}><Mixed text="2012-10-02   0" size={12} /></Panel>
                    </Panels>
                    <StatusTools>
                        <Grip $gap={3} />
                        <Tools list={statusTools} />
                    </StatusTools>
                </StatusBar>
            </Frame>
        </Window>
        </>
    )
}

export default App
